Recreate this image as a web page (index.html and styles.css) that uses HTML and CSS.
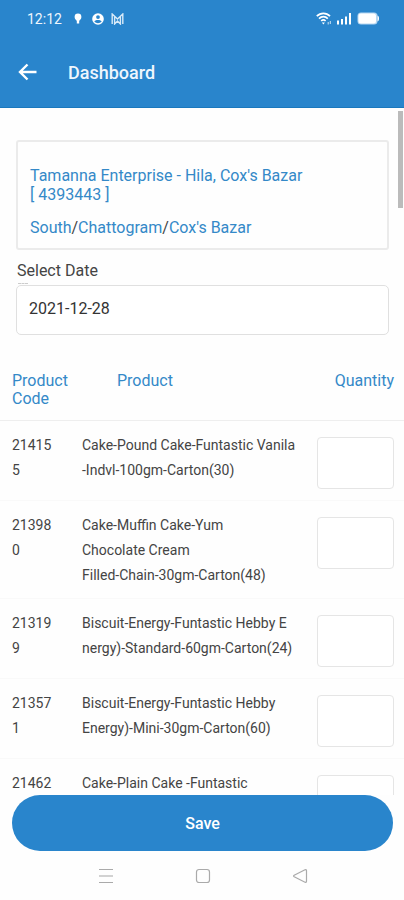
FILE: index.html
```html
<!DOCTYPE html>
<html lang="en">

<head>
  <meta charset="utf-8">
  <meta name="viewport" content="width=device-width, initial-scale=1">
  <title>Dashboard</title>
  <link rel="stylesheet" href="styles.css">
</head>

<body>

  <header class="header">
    <div class="status">
      <span class="time">12:12</span>
      <svg class="pin" width="8" height="12" viewBox="0 0 8 12"><path d="M4 0.5a3.4 3.4 0 0 1 3.4 3.4C7.4 6 5.6 7 5.2 8v2.5H2.8V8C2.4 7 0.6 6 0.6 3.9A3.4 3.4 0 0 1 4 0.5z" fill="#fff"/></svg>
      <svg class="user" width="12" height="12" viewBox="0 0 12 12"><circle cx="6" cy="6" r="5.8" fill="#fff"/><circle cx="6" cy="4.1" r="1.9" fill="#2985cc"/><path d="M2.4 8.8c0-2.4 7.2-2.4 7.2 0-1.8 1.9-5.4 1.9-7.2 0z" fill="#2985cc"/></svg>
      <svg class="mail" width="13" height="12" viewBox="0 0 13 12"><path d="M1.2 11V1L6.500 6l5.300-5V11M3.600 3.500V11L6.500 8l2.900 3V3.500" fill="none" stroke="#d8eaf8" stroke-width="1.400"/></svg>
      <span class="space"></span>
      <svg class="wifi" width="16" height="13" viewBox="0 0 16 13"><g fill="none" stroke="#fff" stroke-width="1.700"><path d="M0.800 4.200C4.500 0.300 10.300 0.300 14 4.200"/><path d="M3 6.700c2.600-2.700 6.200-2.700 8.800 0"/><path d="M5.200 9c1.400-1.300 3-1.300 4.400 0"/></g><path d="M5.900 10.400h3L7.400 12.400z" fill="#fff"/><path d="M12.200 10v2.500M14.300 9v3" stroke="#cfe5f6" stroke-width="1"/></svg>
      <svg class="signal" width="16" height="13" viewBox="0 0 16 13" fill="#fff"><path d="M1 8.500h2v4H1zM5 7h2v5.500H5zM9 4.500h2v8H9zM13 1h2v11.500h-2z"/></svg>
      <svg class="battery" width="23" height="13" viewBox="0 0 23 13"><rect x="0.500" y="0.500" width="20" height="12" rx="3.500" fill="#b5d6f1"/><rect x="1.500" y="1.500" width="17.500" height="10" rx="2.500" fill="#fff"/><path d="M20.500 3.500c2 0.600 2 5.400 0 6z" fill="#fff"/></svg>
    </div>
    <div class="bar">
      <button class="back" type="button" aria-label="Back">
        <svg width="20" height="18" viewBox="0 0 20 18"><path d="M18.500 9H2M9.500 1.500L2 9l7.500 7.500" fill="none" stroke="#fff" stroke-width="2.400"/></svg>
      </button>
      <h1>Dashboard</h1>
    </div>
  </header>

  <main class="main">
    <div class="scrollbar"></div>

    <div class="top">
      <div class="shop">
        <p>Tamanna Enterprise - Hila, Cox's Bazar<br>[ 4393443 ]</p>
        <p>South<i>/</i>Chattogram<i>/</i>Cox's Bazar</p>
      </div>
      <label class="date-label" for="date">Select Date</label>
      <input class="date" id="date" type="text" value="2021-12-28">
    </div>

    <table class="products">
      <thead>
        <tr>
          <th class="code">Product<br>Code</th>
          <th class="product">Product</th>
          <th class="quantity">Quantity</th>
        </tr>
      </thead>
      <tbody>
        <tr>
          <td>21415<br>5</td>
          <td>Cake-Pound Cake-Funtastic Vanila<br>-Indvl-100gm-Carton(30)</td>
          <td><input class="qty" type="text" aria-label="Quantity 214155"></td>
        </tr>
        <tr>
          <td>21398<br>0</td>
          <td>Cake-Muffin Cake-Yum<br>Chocolate Cream<br>Filled-Chain-30gm-Carton(48)</td>
          <td><input class="qty" type="text" aria-label="Quantity 213980"></td>
        </tr>
        <tr>
          <td>21319<br>9</td>
          <td>Biscuit-Energy-Funtastic Hebby E<br>nergy)-Standard-60gm-Carton(24)</td>
          <td><input class="qty" type="text" aria-label="Quantity 213199"></td>
        </tr>
        <tr>
          <td>21357<br>1</td>
          <td>Biscuit-Energy-Funtastic Hebby<br>Energy)-Mini-30gm-Carton(60)</td>
          <td><input class="qty" type="text" aria-label="Quantity 213571"></td>
        </tr>
        <tr>
          <td>21462</td>
          <td>Cake-Plain Cake -Funtastic</td>
          <td><input class="qty" type="text" aria-label="Quantity 21462"></td>
        </tr>
      </tbody>
    </table>
  </main>

  <footer class="footer">
    <button class="save" type="button">Save</button>
    <nav class="nav">
      <button type="button" aria-label="Recent apps">
        <svg width="16" height="16" viewBox="0 0 16 16" fill="none" stroke="#aaa"><path d="M1 1.500h14M1 14.500h14"/><path d="M1 8h14" stroke="#d2d2d2" stroke-width="2"/></svg>
      </button>
      <button type="button" aria-label="Home">
        <svg width="16" height="16" viewBox="0 0 16 16"><rect x="1.500" y="1.500" width="13" height="13" rx="2.500" fill="none" stroke="#aaa" stroke-width="1.200"/></svg>
      </button>
      <button type="button" aria-label="Back">
        <svg width="16" height="16" viewBox="0 0 16 16"><path d="M13 1.800L2.200 7.200q-1.200 0.800 0 1.600L13 14.200q1.500 0.400 1.500-1V2.800q0-1.400-1.500-1z" fill="none" stroke="#aaa" stroke-width="1.200"/></svg>
      </button>
    </nav>
  </footer>

</body>

</html>
```
FILE: styles.css
```css
* { box-sizing: border-box; }
body { margin: 0; height: 100vh; display: flex; flex-direction: column; background: #fefefe; color: #444; font-family: Roboto, "Liberation Sans", sans-serif; font-size: 16px; }
button { border: none; padding: 0; background: none; font-family: inherit; cursor: pointer; }
svg { display: block; }

.header { background: #2985cc; color: #eef6fd; border-bottom: 1px solid #1a78bd; }
.status { display: flex; align-items: center; height: 37px; padding: 0 24px 0 27px; }
.time { font-size: 14px; margin-right: 12px; }
.pin { margin-right: 10px; }
.user { margin-right: 7px; }
.space { flex: 1; }
.wifi { margin-right: 4px; }
.signal { margin-right: 5px; }
.bar { display: flex; align-items: center; height: 70px; padding: 0 18px; }
.bar h1 { margin: 0 0 0 30px; font-size: 18px; font-weight: 500; }

.main { position: relative; flex: 1; min-height: 0; overflow: hidden; }
.scrollbar { position: absolute; top: 3px; right: 1px; width: 5px; height: 97px; background: #bbb; }
.top { padding: 32px 15px 0 16px; }
.shop { border: 2px solid #ebebeb; border-radius: 3px; padding: 24px 12px 11px; color: #3489c8; }
.shop p { margin: 0 0 14px; line-height: 19px; }
.shop p + p { margin: 0; }
.shop i { font-style: normal; color: #444; }
.date-label { position: relative; display: block; padding: 11px 1px 4px; line-height: 20px; }
/* top edge of the floating placeholder, cut off by the box */
.date-label::after { content: ""; position: absolute; left: 2px; bottom: 1px; width: 10px; border-top: 1px dashed #ccc; }
.date { display: block; width: 100%; height: 50px; border: 1px solid #e0e0e0; border-radius: 5px; padding: 0 12px 3px; background: #fff; color: #333; font-family: inherit; font-size: 16px; }

.products { width: 100%; margin-top: 27px; border-collapse: separate; border-spacing: 0; table-layout: fixed; }
.products th { padding: 10px 0 12px; border-bottom: 1px solid #eee; color: #3489c8; font-weight: 400; line-height: 18px; text-align: left; vertical-align: top; }
.products td { padding: 12px 0 10px; border-bottom: 1px solid #f9f9f9; font-size: 14px; line-height: 25px; vertical-align: top; white-space: nowrap; }
.products tr > :first-child { padding-left: 12px; }
.products tr > :last-child { padding-right: 10px; }
.products .code { width: 82px; }
.products .product { padding-left: 35px; }
.products .quantity { width: 87px; text-align: right; }
.qty { display: block; width: 100%; height: 52px; margin: 4px 0 1px; border: 1px solid #e5e5e5; border-radius: 4px; background: #fff; font-family: inherit; font-size: 14px; }

.footer { padding: 0 11px 0 12px; }
.save { display: block; width: 100%; height: 56px; border-radius: 28px; background: #2985cc; color: #fff; font-size: 16px; font-weight: 500; }
.nav { display: flex; justify-content: center; gap: 81px; padding: 17px 0 16px; }
```
